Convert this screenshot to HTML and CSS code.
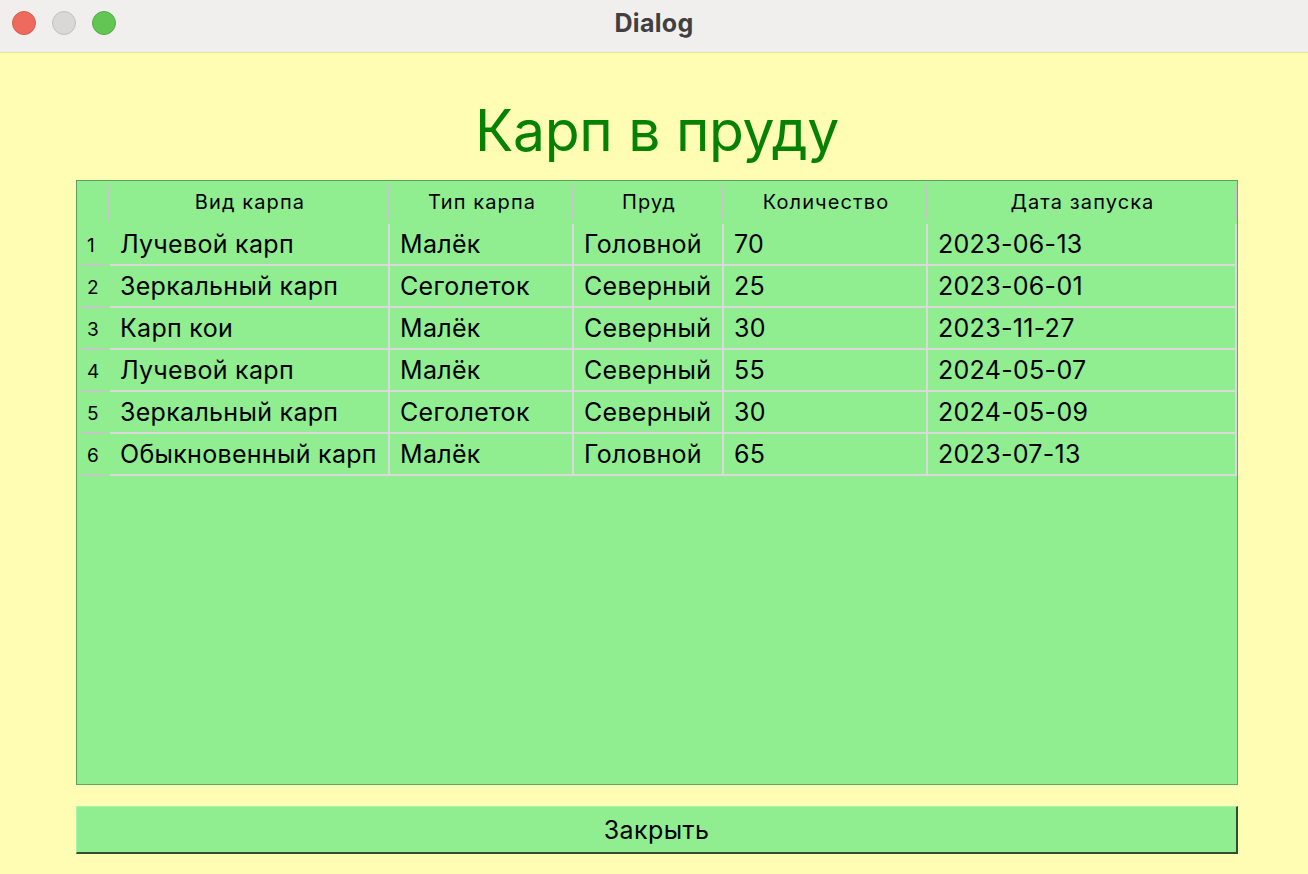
FILE: index.html
```html
<!DOCTYPE html>
<html lang="ru">
<head>
<meta charset="utf-8">
<title>Dialog</title>
<link rel="stylesheet" href="styles.css">
</head>
<body>
<div class="window">
  <div class="titlebar">
    <div class="lights">
      <span class="light red"></span>
      <span class="light gray"></span>
      <span class="light green"></span>
    </div>
    <div class="wtitle">Dialog</div>
  </div>
  <div class="content">
    <h1 class="heading">Карп в пруду</h1>
    <div class="tableview">
      <div class="grid">
        <div class="hcell corner"></div>
        <div class="hcell">Вид карпа</div>
        <div class="hcell">Тип карпа</div>
        <div class="hcell">Пруд</div>
        <div class="hcell">Количество</div>
        <div class="hcell">Дата запуска</div>

        <div class="vcell">1</div>
        <div class="cell">Лучевой карп</div>
        <div class="cell">Малёк</div>
        <div class="cell">Головной</div>
        <div class="cell">70</div>
        <div class="cell">2023-06-13</div>

        <div class="vcell">2</div>
        <div class="cell">Зеркальный карп</div>
        <div class="cell">Сеголеток</div>
        <div class="cell">Северный</div>
        <div class="cell">25</div>
        <div class="cell">2023-06-01</div>

        <div class="vcell">3</div>
        <div class="cell">Карп кои</div>
        <div class="cell">Малёк</div>
        <div class="cell">Северный</div>
        <div class="cell">30</div>
        <div class="cell">2023-11-27</div>

        <div class="vcell">4</div>
        <div class="cell">Лучевой карп</div>
        <div class="cell">Малёк</div>
        <div class="cell">Северный</div>
        <div class="cell">55</div>
        <div class="cell">2024-05-07</div>

        <div class="vcell">5</div>
        <div class="cell">Зеркальный карп</div>
        <div class="cell">Сеголеток</div>
        <div class="cell">Северный</div>
        <div class="cell">30</div>
        <div class="cell">2024-05-09</div>

        <div class="vcell">6</div>
        <div class="cell">Обыкновенный карп</div>
        <div class="cell">Малёк</div>
        <div class="cell">Головной</div>
        <div class="cell">65</div>
        <div class="cell">2023-07-13</div>
      </div>
    </div>
    <button class="close" type="button">Закрыть</button>
  </div>
</div>
</body>
</html>
```
FILE: styles.css
```css
* { box-sizing: border-box; }
html, body { margin: 0; padding: 0; }
body {
  width: 1308px;
  height: 874px;
  overflow: hidden;
  font-family: Inter, "Noto Sans", sans-serif;
  background: #fffdb4;
}
.window {
  width: 1308px;
  height: 874px;
  display: flex;
  flex-direction: column;
}
.titlebar {
  height: 53px;
  flex: none;
  background: #f0efee;
  border-bottom: 1px solid #ece69a;
  display: flex;
  align-items: center;
  justify-content: center;
  position: relative;
}
.lights {
  position: absolute;
  left: 12px;
  top: 11px;
  display: flex;
  gap: 16px;
}
.light {
  width: 24px;
  height: 24px;
  border-radius: 50%;
  display: block;
}
.light.red { background: #ee6a5e; border: 1px solid #d55c51; }
.light.gray { background: #d9d8d7; border: 1px solid #c2c1c0; }
.light.green { background: #62c554; border: 1px solid #52ac45; }
.wtitle {
  font-weight: 700;
  font-size: 25px;
  letter-spacing: 0.3px;
  color: #404040;
  margin-top: -6px;
}
.content {
  flex: 1;
  padding: 0 70px 0 76px;
  display: flex;
  flex-direction: column;
}
.heading {
  margin: 40px 0 0;
  height: 87px;
  font-weight: 400;
  font-size: 57px;
  line-height: 76px;
  color: #058205;
  text-align: center;
  letter-spacing: -0.3px;
}
.tableview {
  width: 1162px;
  height: 605px;
  background: #90ee90;
  border: 1px solid #5e9e5e;
  border-bottom-color: #62a862;
  border-right-color: #62a862;
}
.grid {
  display: grid;
  grid-template-columns: 33px 280px 184px 150px 204px 309px;
  grid-auto-rows: 42px;
  grid-template-rows: 43px;
}
.hcell {
  display: flex;
  align-items: center;
  justify-content: center;
  font-size: 20px;
  letter-spacing: 1.1px;
  color: #000;
  position: relative;
  padding-bottom: 2px;
}
.hcell::after {
  content: "";
  position: absolute;
  right: 0;
  top: 4px;
  bottom: 4px;
  width: 2px;
  background: #c6c6c6;
}
.cell {
  display: flex;
  align-items: center;
  padding-left: 10px;
  font-size: 25px;
  letter-spacing: 0.3px;
  color: #000;
  white-space: nowrap;
  border-right: 2px solid #dadada;
  border-bottom: 2px solid #dadada;
}
.vcell {
  display: flex;
  align-items: center;
  padding-left: 10px;
  font-size: 19px;
  color: #000;
  position: relative;
}
.vcell::after {
  content: "";
  position: absolute;
  left: 4px;
  right: 4px;
  bottom: 0;
  height: 2px;
  background: #c6c6c6;
}
.close {
  margin-top: 21px;
  width: 1162px;
  height: 48px;
  background: #90ee90;
  border-top: 1px solid #a8f4a8;
  border-left: 1px solid #a8f4a8;
  border-right: 2px solid #2f4f2f;
  border-bottom: 2px solid #2f4f2f;
  font-family: Inter, "Noto Sans", sans-serif;
  font-size: 25px;
  letter-spacing: 0.4px;
  color: #000;
  padding: 0;
}
```
